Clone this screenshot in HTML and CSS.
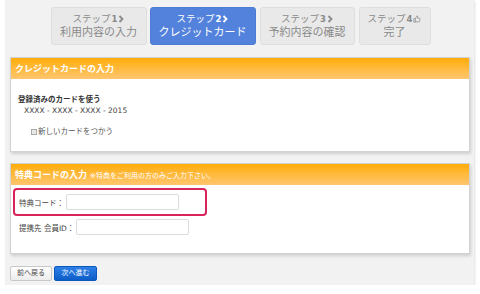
FILE: index.html
```html
<!DOCTYPE html>
<html lang="ja">
<head>
  <meta charset="UTF-8" />
  <meta name="viewport" content="width=device-width, initial-scale=1.0" />
  <title>クレジットカード</title>
  <link rel="stylesheet" href="styles.css">
</head>
<body>
  <div class="page">
    <ul class="steps">
      <li class="step step-1">
        <span class="step-no">ステップ<b>1</b><svg class="chev" viewBox="0 0 6 8"><polyline points="1.5,1 4.5,4 1.5,7" /></svg></span>
        <span class="step-name">利用内容の入力</span>
      </li>
      <li class="step step-2 active">
        <span class="step-no">ステップ<b>2</b><svg class="chev" viewBox="0 0 6 8"><polyline points="1.5,1 4.5,4 1.5,7" /></svg></span>
        <span class="step-name">クレジットカード</span>
      </li>
      <li class="step step-3">
        <span class="step-no">ステップ<b>3</b><svg class="chev" viewBox="0 0 6 8"><polyline points="1.5,1 4.5,4 1.5,7" /></svg></span>
        <span class="step-name">予約内容の確認</span>
      </li>
      <li class="step step-4">
        <span class="step-no">ステップ<b>4</b><svg class="thumb" viewBox="0 0 10 10"><path d="M1 4.5h2v4.5h-2z M3 4.5l2-3.5c0.8 0 1.2 0.6 1 1.4l-0.4 1.6h2.4c0.6 0 1 0.5 0.9 1l-0.6 2.8c-0.1 0.5-0.5 0.7-1 0.7h-4.3" /></svg></span>
        <span class="step-name">完了</span>
      </li>
    </ul>

    <section class="panel">
      <h2 class="panel-head">クレジットカードの入力</h2>
      <div class="panel-body card-body">
        <p class="saved-title">登録済みのカードを使う</p>
        <p class="saved-number">XXXX - XXXX - XXXX - 2015</p>
        <label class="new-card"><input type="checkbox" class="check" />新しいカードをつかう</label>
      </div>
    </section>

    <section class="panel">
      <h2 class="panel-head">特典コードの入力<small>※特典をご利用の方のみご入力下さい。</small></h2>
      <div class="panel-body code-body">
        <div class="field field-code">
          <label class="field-label">特典コード：</label>
          <input type="text" class="input" />
        </div>
        <div class="field field-member">
          <label class="field-label">提携先 会員ID：</label>
          <input type="text" class="input" />
        </div>
      </div>
    </section>

    <div class="actions">
      <button class="btn btn-back">前へ戻る</button>
      <button class="btn btn-next">次へ進む</button>
    </div>
  </div>
</body>
</html>
```

FILE: styles.css
```css
body {
  margin: 0;
  background-color: #fff;
  font-family: 'DejaVu Sans', 'Noto Sans CJK JP', sans-serif;
  color: #333;
}

.page {
  box-sizing: border-box;
  width: 469px;
  margin-left: 5px;
  padding: 7px 4px 4px 5px;
  background-color: #f2f2f2;
  box-shadow: 1px 1px 2px rgba(0, 0, 0, 0.12);
}

/* steps */

.steps {
  display: flex;
  justify-content: center;
  gap: 4px;
  margin: 0;
  padding: 0 0 0 1px;
  list-style: none;
}

.step {
  box-sizing: border-box;
  height: 38px;
  display: flex;
  flex-direction: column;
  justify-content: center;
  align-items: center;
  padding-bottom: 1px;
  background-color: #e9e9e9;
  border: 1px solid #dedede;
  border-radius: 3px;
  color: #8a8a8a;
  line-height: 14px;
}

.step-1 { width: 96px; margin-right: -1px; }
.step-2 { width: 106px; }
.step-3 { width: 95px; }
.step-4 { width: 72px; }

.step.active {
  background-color: #5382dc;
  border-color: #4d7bd4;
  color: #fff;
}

.step-no {
  display: flex;
  align-items: center;
  font-size: 9.5px;
}

.step-no b {
  margin-left: 1px;
  font-size: 8.5px;
}

.step-name {
  font-size: 11px;
}

.chev {
  width: 6px;
  height: 8px;
  margin-left: 1px;
  fill: none;
  stroke: currentColor;
  stroke-width: 1.8;
}

.thumb {
  width: 8px;
  height: 8px;
  margin-left: 1px;
  fill: none;
  stroke: currentColor;
  stroke-width: 0.9;
}

/* panels */

.panel {
  margin-top: 12px;
  background-color: #fff;
  border: 1px solid #d2d2d2;
  box-shadow: 1px 2px 3px rgba(0, 0, 0, 0.15);
}

.panel + .panel {
  margin-top: 11px;
}

.panel-head {
  margin: 0;
  height: 21px;
  padding-left: 4px;
  display: flex;
  align-items: center;
  background: linear-gradient(#ffad0a, #ffc670);
  color: #fff;
  font-size: 9px;
  font-weight: bold;
}

.panel-head small {
  margin-left: 3px;
  font-size: 7px;
  font-weight: normal;
}

.card-body {
  padding: 15px 7px 14px;
  font-size: 7.5px;
  line-height: 11px;
}

.card-body p {
  margin: 0;
}

.saved-title {
  font-weight: bold;
}

.saved-number {
  padding-left: 6px;
  color: #444;
}

.new-card {
  display: flex;
  align-items: center;
  margin: 10px 0 0 13px;
  color: #555;
}

.check {
  appearance: none;
  width: 6px;
  height: 6px;
  margin: 0 1px 0 0;
  border: 1px solid #aaa;
  background-color: #e8e8e8;
}

.code-body {
  padding: 3px 0 18px 2px;
}

.field {
  display: flex;
  align-items: center;
  font-size: 7.5px;
  color: #444;
}

.field-code {
  box-sizing: border-box;
  width: 194px;
  height: 28px;
  padding-left: 4px;
  border: 2px solid #d8245a;
  border-radius: 4px;
}

.field-code .field-label {
  width: 47px;
}

.field-member {
  margin-top: 3px;
  padding-left: 6px;
}

.field-member .field-label {
  width: 57px;
}

.input {
  box-sizing: border-box;
  width: 113px;
  height: 16px;
  margin: 0;
  border: 1px solid #dcdcdc;
  border-radius: 2px;
  background-color: #fff;
}

/* buttons */

.actions {
  display: flex;
  gap: 2px;
  margin-top: 12px;
}

.btn {
  box-sizing: border-box;
  height: 15px;
  padding: 0;
  border-radius: 2px;
  font-family: inherit;
  font-size: 7px;
  line-height: 13px;
  cursor: pointer;
}

.btn-back {
  width: 42px;
  background: linear-gradient(#fff, #ececec);
  border: 1px solid #c8c8c8;
  color: #444;
}

.btn-next {
  width: 43px;
  background: linear-gradient(#2d80e6, #0d5dc9);
  border: 1px solid #0b58bd;
  color: #fff;
}
```
